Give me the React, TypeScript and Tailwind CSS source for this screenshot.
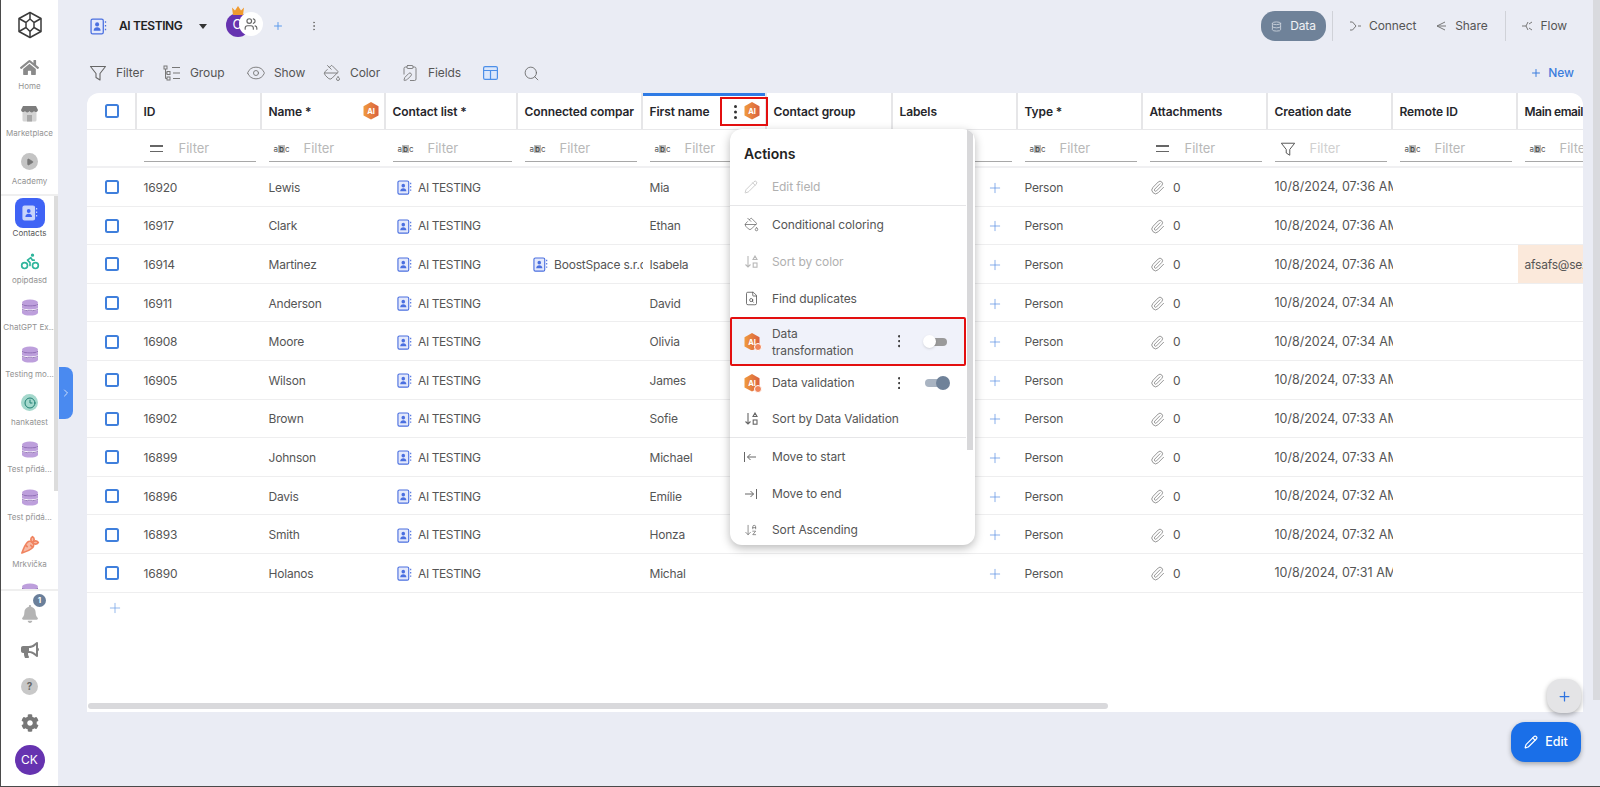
import React from "react";
import { Eye, Search, Paperclip, Plus, Pencil, Users, EllipsisVertical, Bike, Carrot, ChevronRight, Database, PaintBucket, Play, FileSearch, ArrowDownAZ, ClipboardPen, Clock3 } from "lucide-react";
import { FaBell, FaBullhorn, FaCog, FaHome } from "react-icons/fa";

const FONT = "font-['Inter','Liberation_Sans',sans-serif]";
const widths = [125, 124, 132, 125, 124, 126, 125, 125, 125, 125, 125, 125];
const heads = ["ID", "Name *", "Contact list *", "Connected compar", "First name", "Contact group", "Labels", "Type *", "Attachments", "Creation date", "Remote ID", "Main email"];
const filt = ["eq", "abc", "abc", "abc", "abc", "abc", "abc", "abc", "eq", "fun", "abc", "abc"];
const rows = [
  ["16920", "Lewis", "Mia", "07:36"], ["16917", "Clark", "Ethan", "07:36"], ["16914", "Martinez", "Isabela", "07:36"],
  ["16911", "Anderson", "David", "07:34"], ["16908", "Moore", "Olivia", "07:34"], ["16905", "Wilson", "James", "07:33"],
  ["16902", "Brown", "Sofie", "07:33"], ["16899", "Johnson", "Michael", "07:33"], ["16896", "Davis", "Emílie", "07:32"],
  ["16893", "Smith", "Honza", "07:32"], ["16890", "Holanos", "Michal", "07:31"],
];

function Funnel({ s = 18, c = "#666" }: { s?: number; c?: string }) {
  return <svg width={s} height={s} viewBox="0 0 18 18" fill="none" stroke={c} strokeWidth="1.1" strokeLinejoin="round"><path d="M1.5 2.5h15L11 9.5v6.5l-4-2.5v-4z" /></svg>;
}
function Book({ s = 16, bg = "#e4e9fb", c = "#4a6fe0", p }: { s?: number; bg?: string; c?: string; p?: string }) {
  const person = p || c;
  return (
    <svg width={s} height={s} viewBox="0 0 16 16" fill="none">
      <rect x="1" y="1" width="11.5" height="14" rx="1.5" fill={bg} stroke={c} strokeWidth="1.2" />
      <circle cx="6.7" cy="6" r="1.9" fill={person} /><path d="M3.4 12c0-2.2 1.5-3.2 3.3-3.2S10 9.800 10 12z" fill={person} />
      <path d="M14.600 3v1.500M14.600 6.500v1.500M14.600 10v1.500" stroke={c} strokeWidth="1.200" />
    </svg>
  );
}
function AI({ w = 16, mark }: { w?: number; mark?: "plus" | "check" }) {
  const id = mark ? "g" + mark : "g0";
  return (
    <span className="relative inline-flex shrink-0">
      <svg width={w} height={w * 1.1} viewBox="0 0 16 17.600">
        <defs><linearGradient id={id} x1="0" x2="1"><stop offset="0" stopColor="#f09a3e" /><stop offset="1" stopColor="#d9603f" /></linearGradient></defs>
        <polygon points="8,0 15.500,4.200 15.500,13.400 8,17.600 0.500,13.400 0.500,4.200" fill={`url(#${id})`} />
        <text x="8" y="11.800" textAnchor="middle" fontSize="7.500" fontWeight="700" fill="#fff" fontFamily="Inter">AI</text>
      </svg>
      {mark && <span className="absolute -right-[2px] -bottom-[1px] w-[8px] h-[8px] rounded-full bg-[#f0845a] border border-white" />}
    </span>
  );
}
function Abc() {
  return (
    <span className="inline-flex items-center text-[8px] leading-none text-[#555] w-[16px] justify-center">
      a<span className="bg-[#bbb] px-[1px] text-[#333]">b</span>c
    </span>
  );
}
function Eq() {
  return <span className="flex flex-col gap-[4px] w-[13px]"><span className="h-[1.5px] bg-[#666]" /><span className="h-[1.5px] bg-[#666]" /></span>;
}
function Check() {
  return <span className="block w-[14px] h-[14px] rounded-[2.5px] border-2 border-[#3f7fdc] bg-white" />;
}
function Db({ s = 18 }: { s?: number }) {
  return (
    <svg width={s} height={s} viewBox="0 0 18 18">
      <ellipse cx="9" cy="4" rx="8" ry="3.400" fill="#bd9fdc" />
      <path d="M1 5.600C2 8 16 8 17 5.600V8.800C16 11 2 11 1 8.800z" fill="#bd9fdc" />
      <path d="M1 10.400C2 12.700 16 12.700 17 10.400V14C16 17.400 2 17.400 1 14z" fill="#bd9fdc" />
      <path d="M1 5.200C3 7.600 15 7.600 17 5.200M1 10C3 12.300 15 12.300 17 10" stroke="#7f5aa8" strokeWidth="0.800" fill="none" />
    </svg>
  );
}
function SortIcon({ c }: { c: string }) {
  return (
    <svg width="15" height="14" viewBox="0 0 15 14" fill="none" stroke={c} strokeWidth="1.100">
      <path d="M4 1v11M1.500 9.500 4 12l2.500-2.500" />
      <path d="M11 1 13 4.500H9z" />
      <rect x="9.200" y="8" width="3.800" height="4.200" />
    </svg>
  );
}
function Dots({ r = 1.200, gap = 2.500, c = "#444" }: { r?: number; gap?: number; c?: string }) {
  const h = r * 6 + gap * 2;
  return <svg width={r * 2} height={h} viewBox={`0 0 ${r * 2} ${h}`} fill={c}><circle cx={r} cy={r} r={r} /><circle cx={r} cy={h / 2} r={r} /><circle cx={r} cy={h - r} r={r} /></svg>;
}

function NavItem({ icon, label, strong }: { icon: React.ReactNode; label: string; strong?: boolean }) {
  return (
    <div className="h-[47.400px] shrink-0 flex flex-col items-center">
      <div className="h-[24px] mt-[3px] flex items-center justify-center">{icon}</div>
      <div className={`h-[14px] leading-[14px] text-[8px] whitespace-nowrap ${strong ? "text-[#555]" : "text-[#939393]"}`}>{label}</div>
    </div>
  );
}

function Sidebar() {
  return (
    <aside className="w-[58px] shrink-0 h-full bg-white border-l-[1.500px] border-[#4a4a4a] flex flex-col relative">
      <div className="h-[52px] shrink-0 flex items-start justify-center pt-[11px]">
        <svg width="26" height="28" viewBox="0 0 26 28" fill="none" stroke="#3a3a3a" strokeWidth="1.500" strokeLinejoin="round">
          <path d="M13 1.500 24 7.500V20.500L13 26.500 2 20.500V7.500z" />
          <path d="M2 7.500 9 11.500M24 7.500 17 11.500M13 1.500V8M9 11.500 13 8 17 11.500 17 16.500M9 11.500V16.500M13 26.500V20.500M2 20.500 9 16.500 13 20.500 17 16.500 24 20.500" />
        </svg>
      </div>
      <NavItem label="Home" icon={<FaHome size={19} color="#8a8a8a" />} />
      <NavItem label="Marketplace" icon={
        <svg width="17" height="16" viewBox="0 0 17 16"><rect x="1.500" y="4" width="14" height="11.500" rx="1.500" fill="#d4d4d4" /><rect x="6" y="9" width="5" height="6.500" fill="#a8a8a8" /><path d="M2 0h13l2 4a2.200 2.200 0 0 1-4 1 2.500 2.500 0 0 1-4.500 0A2.500 2.500 0 0 1 4 5 2.200 2.200 0 0 1 0 4z" fill="#7d7d7d" /></svg>
      } />
      <NavItem label="Academy" icon={<span className="w-[17px] h-[17px] rounded-full bg-[#c4c4c4] flex items-center justify-center"><Play size={8} fill="#777" stroke="#777" /></span>} />
      <div className="h-[2px] bg-[#efefef] shrink-0" />
      <div className="h-[393px] shrink-0 overflow-hidden pt-[2px] relative">
        <div className="h-[47.400px] flex flex-col items-center">
          <div className="w-[30px] h-[30px] rounded-[8px] bg-[#3f63f5] flex items-center justify-center"><Book s={16} bg="#c9d4fb" c="#c9d4fb" p="#3f63f5" /></div>
          <div className="mt-[-2px] h-[14px] leading-[14px] text-[8px] text-[#555]">Contacts</div>
        </div>
        <NavItem label="opipdasd" icon={<Bike size={20} stroke="#2fb59c" />} />
        <NavItem label="ChatGPT Ex..." icon={<Db />} />
        <NavItem label="Testing mo..." icon={<Db />} />
        <NavItem label="hankatest" icon={<span className="w-[17px] h-[17px] rounded-full bg-[#a4d8cc] flex items-center justify-center"><Clock3 size={12} stroke="#1f7f72" /></span>} />
        <NavItem label="Test přidá..." icon={<Db />} />
        <NavItem label="Test přidá..." icon={<Db />} />
        <NavItem label="Mrkvička" icon={<Carrot size={20} fill="#f7b9a4" stroke="#f0835f" />} />
        <NavItem label="" icon={<Db />} />
        <div className="absolute right-0 top-0 w-[4px] h-[295px] bg-[#dcdcdc]" />
      </div>
      <div className="h-[1.500px] bg-[#efefef] shrink-0" />
      <div className="flex-1 flex flex-col items-center">
        <div className="h-[40px] w-full flex items-center justify-center relative pt-[6px]">
          <FaBell size={18} color="#b4b4b4" />
          <span className="absolute left-[32px] top-[3px] w-[13px] h-[13px] rounded-full bg-[#6a7f9a] text-white text-[8px] font-bold flex items-center justify-center">1</span>
        </div>
        <div className="h-[38px] flex items-center"><FaBullhorn size={18} color="#808080" /></div>
        <div className="h-[36px] flex items-center"><span className="w-[17px] h-[17px] rounded-full bg-[#c8c8c8] text-[#666] text-[10px] font-bold flex items-center justify-center">?</span></div>
        <div className="h-[36px] flex items-center"><FaCog size={18} color="#777" /></div>
        <div className="w-[30px] h-[30px] mt-[4px] rounded-full bg-[#6633b0] text-white text-[12px] flex items-center justify-center">CK</div>
      </div>
    </aside>
  );
}

function TopBar() {
  return (
    <div className="h-[50px] shrink-0 flex items-center pt-[2px]">
      <div className="ml-[3px]"><Book s={17} /></div>
      <span className="ml-[12px] text-[12px] font-semibold tracking-[-0.4px] text-[#222]">AI TESTING</span>
      <span className="ml-[17px] w-0 h-0 border-l-[4px] border-r-[4px] border-t-[5px] border-l-transparent border-r-transparent border-t-[#333]" />
      <div className="ml-[19px] relative w-[40px] h-[26px]">
        <span className="absolute left-0 top-0 w-[24px] h-[24px] rounded-full bg-[#6633b0] text-white text-[13px] flex items-center pl-[6px]">C</span>
        <svg className="absolute left-[6px] -top-[7px]" width="12" height="9" viewBox="0 0 12 9"><path d="M0 1.500 3 4.500 6 0 9 4.500 12 1.500 11 9H1z" fill="#f09a2e" /></svg>
        <span className="absolute left-[13px] -top-[1px] w-[24px] h-[24px] rounded-full bg-white flex items-center justify-center"><Users size={14} stroke="#666" /></span>
      </div>
      <Plus size={12} className="ml-[6px]" stroke="#5d9bec" />
      <EllipsisVertical size={12} className="ml-[24px]" stroke="#777" />
      <div className="ml-auto flex items-center text-[12px] tracking-[-0.1px] text-[#555]">
        <div className="w-[65px] h-[30px] rounded-[14px] bg-[#6f8299] text-white/90 flex items-center justify-center gap-[8px]"><Database size={11} stroke="#c8d0da" />Data</div>
        <div className="ml-[6px] w-px h-[30px] bg-[#d0d2d8]" />
        <svg className="ml-[17px]" width="11" height="10" viewBox="0 0 11 10" fill="none" stroke="#777"><path d="M0 1h2.500L6 5 2.500 9H0M8 5h3" /></svg>
        <span className="ml-[8px]">Connect</span>
        <svg className="ml-[20px]" width="11" height="10" viewBox="0 0 11 10" fill="none" stroke="#777"><path d="M9 1 1 5l8 4M1 5h9" /></svg>
        <span className="ml-[8px]">Share</span>
        <div className="ml-[17px] w-px h-[30px] bg-[#d0d2d8]" />
        <svg className="ml-[16px]" width="11" height="10" viewBox="0 0 11 10" fill="none" stroke="#777"><path d="M0 5h4l2-4M4 5l2 4M7 3l3-2M7 7l3 2" /></svg>
        <span className="ml-[8px]">Flow</span>
        <span className="w-[16px]" />
      </div>
    </div>
  );
}

function ToolItem({ w, gap, icon, label }: { w: number; gap: number; icon: React.ReactNode; label?: string }) {
  return (
    <div style={{ width: w, gap }} className="shrink-0 flex items-center text-[12px] tracking-[-0.1px] text-[#555]">
      {icon}{label}
    </div>
  );
}

function Toolbar() {
  return (
    <div className="h-[43px] shrink-0 flex items-center pt-[3px]">
      <ToolItem w={76} gap={9} icon={<span className="ml-[2px]"><Funnel s={18} /></span>} label="Filter" />
      <ToolItem w={83} gap={9} icon={<svg width="18" height="16" viewBox="0 0 18 16" fill="none" stroke="#777"><rect x="1" y="1" width="3" height="3" /><rect x="4" y="6.500" width="3" height="3" /><rect x="4" y="12" width="3" height="3" /><path d="M2.500 4v9.500H4M2.500 8H4M9 2.500h8M10 8h7M10 13.500h7" /></svg>} label="Group" />
      <ToolItem w={77} gap={8} icon={<Eye size={20} stroke="#777" strokeWidth={1.100} />} label="Show" />
      <ToolItem w={78} gap={9} icon={<PaintBucket size={18} stroke="#777" strokeWidth={1.200} />} label="Color" />
      <ToolItem w={82} gap={9} icon={<ClipboardPen size={18} stroke="#777" strokeWidth={1.200} />} label="Fields" />
      <ToolItem w={40} gap={0} icon={<svg width="15" height="14" viewBox="0 0 15 14" fill="#dbe7fb" stroke="#4d8fe8" strokeWidth="1.200"><rect x="0.600" y="0.600" width="13.800" height="12.800" rx="1.500" /><path d="M0.600 4.500h13.800M7.500 4.500v9" /></svg>} />
      <ToolItem w={20} gap={0} icon={<Search size={17} stroke="#666" strokeWidth={1.200} />} />
      <div className="ml-auto mr-[9px] flex items-center gap-[6px] text-[12px] font-medium text-[#3b7ddd]"><Plus size={12} stroke="#3b7ddd" />New</div>
    </div>
  );
}

function Table() {
  const t = "text-[12px] tracking-[-0.2px]";
  return (
    <div className="relative h-[619px] bg-white rounded-t-[12px] overflow-hidden shrink-0">
      <div className="flex h-[37px] border-b border-[#e8e8ea] w-max">
        <div className="w-[50px] flex items-center pl-[18px] border-r-2 border-[#e6e6e8]"><Check /></div>
        {heads.map((h, i) => (
          <div key={h} style={{ width: widths[i] }} className={`relative shrink-0 flex items-center pl-[6.500px] pt-[2px] text-[12px] font-semibold text-[#26262b] whitespace-nowrap overflow-hidden ${i < 11 ? "border-r-2 border-[#e6e6e8] tracking-[-0.1px]" : "tracking-[-0.4px]"}`}>
            {h}
            {i === 1 && <span className="absolute right-[5px] top-[9px]"><AI w={16} /></span>}
            {i === 4 && <><span className="absolute left-0 right-0 top-0 h-[3px] bg-[#2f7be5]" /><span className="absolute right-[5px] top-[9px]"><AI w={16} /></span></>}
          </div>
        ))}
      </div>
      <div className="flex h-[38px] border-b-2 border-[#f0f0f2] w-max items-center">
        <div className="w-[50px] shrink-0" />
        {filt.map((f, i) => (
          <div key={i} style={{ width: widths[i] }} className="shrink-0 pl-[6.500px] pr-[6px]">
            <div className="h-[26px] mt-[2px] border-b border-[#a8a8a8] flex items-center">
              <span className="w-[35px] flex justify-center pr-[9px]">{f === "abc" ? <Abc /> : f === "eq" ? <Eq /> : <Funnel s={16} c="#555" />}</span>
              <span className={`text-[13px] ${f === "fun" ? "text-[#d0d0d0]" : "text-[#b8b8b8]"}`}>Filter</span>
            </div>
          </div>
        ))}
      </div>
      {rows.map((r, k) => (
        <div key={r[0]} className={`flex h-[38.600px] pt-[2px] border-b border-[#eeeeef] w-max items-center text-[#555] whitespace-nowrap ${t}`}>
          <div className="w-[50px] pl-[18px] shrink-0 mb-[1px]"><Check /></div>
          <div style={{ width: widths[0] }} className="shrink-0 pl-[6.500px]">{r[0]}</div>
          <div style={{ width: widths[1] }} className="shrink-0 pl-[6.500px]">{r[1]}</div>
          <div style={{ width: widths[2] }} className="shrink-0 pl-[11px] flex items-center gap-[6px]"><Book s={15} /><span className="tracking-[-0.4px]">AI TESTING</span></div>
          <div style={{ width: widths[3] }} className="shrink-0 pl-[15px] pr-[12px] overflow-hidden flex items-center gap-[6px]">{k === 2 && <><span className="shrink-0"><Book s={15} /></span>BoostSpace s.r.o.</>}</div>
          <div style={{ width: widths[4] }} className="shrink-0 pl-[6.500px]">{r[2]}</div>
          <div style={{ width: widths[5] }} className="shrink-0" />
          <div style={{ width: widths[6] }} className="shrink-0 pl-[94px]"><Plus size={16} stroke="#5d93e4" strokeWidth={1.100} /></div>
          <div style={{ width: widths[7] }} className="shrink-0 pl-[6.500px]">Person</div>
          <div style={{ width: widths[8] }} className="shrink-0 pl-[7px] flex items-center gap-[8px]"><Paperclip size={15} stroke="#888" strokeWidth={1.400} />0</div>
          <div style={{ width: widths[9] }} className="shrink-0 pl-[6.500px] pr-[6px] overflow-hidden text-[12.500px] tracking-normal">10/8/2024, {r[3]} AM</div>
          <div style={{ width: widths[10] }} className="shrink-0" />
          <div style={{ width: widths[11] }} className={`shrink-0 self-stretch -mt-[2px] pt-[2px] flex items-center pl-[6.500px] ${k === 2 ? "bg-[#fbe9db]" : ""}`}>{k === 2 ? "afsafs@seznam.cz" : ""}</div>
        </div>
      ))}
      <div className="pl-[20px] pt-[7px]"><Plus size={16} stroke="#6f9fe6" strokeWidth={1.100} /></div>
      <div className="absolute left-[1px] bottom-[3px] w-[1020px] h-[6px] rounded-full bg-[#d9d9dc]" />
    </div>
  );
}

function Menu() {
  const row = "flex items-center pl-[14px] text-[12px] tracking-[-0.1px] whitespace-nowrap";
  const ic = "w-[28px] shrink-0 flex items-center";
  const on = "text-[#555]", off = "text-[#b0b0b0]";
  return (
    <div className="absolute left-[730px] top-[129px] w-[245px] h-[416px] bg-white rounded-[12px] overflow-hidden shadow-[0_3px_10px_rgba(0,0,0,0.28)]">
      <div className="absolute right-[2px] top-0 w-[6px] h-[321px] bg-[#d8d8da]" />
      <div className="h-[40px] pt-[8px] pl-[14px] flex items-center text-[14px] font-semibold text-[#222]">Actions</div>
      <div className="w-[236px]">
        <div className={`h-[36px] ${row} ${off}`}><span className={ic}><Pencil size={14} stroke="#b8b8b8" strokeWidth={1.200} /></span>Edit field</div>
        <div className="h-px bg-[#e6e6e8]" />
        <div className={`h-[37px] ${row} ${on}`}><span className={ic}><PaintBucket size={15} stroke="#666" strokeWidth={1.200} /></span>Conditional coloring</div>
        <div className={`h-[37px] ${row} ${off}`}><span className={ic}><SortIcon c="#b8b8b8" /></span>Sort by color</div>
        <div className={`h-[37px] ${row} ${on}`}><span className={ic}><FileSearch size={15} stroke="#555" strokeWidth={1.300} /></span>Find duplicates</div>
        <div className="h-[49px] flex items-center pl-[12px] bg-[#f0f2fa] border-[2.500px] border-[#e30f0f] rounded-[2px] text-[12px] tracking-[-0.1px] text-[#555]">
          <span className="w-[28px] shrink-0 flex items-center"><AI w={16} mark="plus" /></span>
          <span className="w-[126px] leading-[17px]">Data<br />transformation</span>
          <Dots />
          <span className="ml-[24px] relative w-[23px] h-[8px] rounded-full bg-[#9a9a9a]"><span className="absolute -left-[1px] -top-[2.500px] w-[13px] h-[13px] rounded-full bg-white shadow-sm" /></span>
        </div>
        <div className={`h-[34px] ${row} ${on} relative`}><span className={ic}><AI w={16} mark="check" /></span><span className="w-[126px]">Data validation</span>
          <Dots />
          <span className="ml-[25px] relative w-[24px] h-[8px] rounded-full bg-[#a9b4c2]"><span className="absolute -right-[1px] -top-[3px] w-[14px] h-[14px] rounded-full bg-[#6f8299]" /></span>
        </div>
        <div className={`h-[37px] ${row} ${on}`}><span className={ic}><SortIcon c="#666" /></span>Sort by Data Validation</div>
        <div className="h-px bg-[#e6e6e8]" />
        <div className={`h-[37px] ${row} ${on}`}><span className={ic}><svg width="13" height="10" viewBox="0 0 13 10" fill="none" stroke="#666"><path d="M.5 0v10M12 5H3.500M6.500 2 3.500 5l3 3" /></svg></span>Move to start</div>
        <div className={`h-[37px] ${row} ${on}`}><span className={ic}><svg width="13" height="10" viewBox="0 0 13 10" fill="none" stroke="#666"><path d="M12.500 0v10M1 5h8.500M6.500 2l3 3-3 3" /></svg></span>Move to end</div>
        <div className={`h-[36px] ${row} ${on}`}><span className={ic}><ArrowDownAZ size={14} stroke="#666" strokeWidth={1.200} /></span>Sort Ascending</div>
      </div>
    </div>
  );
}

export default function App() {
  return (
    <div className={`relative w-[1600px] h-[787px] overflow-hidden bg-[#eaecf4] flex ${FONT}`}>
      <Sidebar />
      <main className="flex-1 min-w-0 flex flex-col pl-[29px] pr-[17px]">
        <TopBar />
        <Toolbar />
        <Table />
      </main>
      <Menu />
      <span className="absolute left-[720px] top-[97px] w-[48px] h-[29px] border-[2.500px] border-[#e30f0f] flex items-center pl-[12px]"><Dots r={1.500} gap={2.500} c="#333" /></span>
      <div className="absolute left-[59px] top-[367px] w-[14px] h-[52px] rounded-r-[8px] bg-[#4a8af0] flex items-center justify-center"><ChevronRight size={12} stroke="#cfe0fb" /></div>
      <div className="absolute right-0 top-0 w-[7px] h-[700px] bg-[#d9dade]" />
      <button className="absolute left-[1547px] top-[679px] w-[34px] h-[34px] rounded-[14px] bg-[#e4e4e6] shadow-[0_2px_5px_rgba(0,0,0,0.3)] flex items-center justify-center"><Plus size={15} stroke="#2f74e0" strokeWidth={2} /></button>
      <button className="absolute left-[1511px] top-[722px] w-[70px] h-[40px] rounded-[14px] bg-[#1a6fe8] text-white text-[12.500px] font-medium shadow-[0_2px_5px_rgba(0,0,0,0.3)] flex items-center justify-center gap-[7px]"><Pencil size={14} stroke="#fff" />Edit</button>
      <div className="absolute left-0 right-0 bottom-0 h-[1.500px] bg-[#4a4a4a]" />
    </div>
  );
}
